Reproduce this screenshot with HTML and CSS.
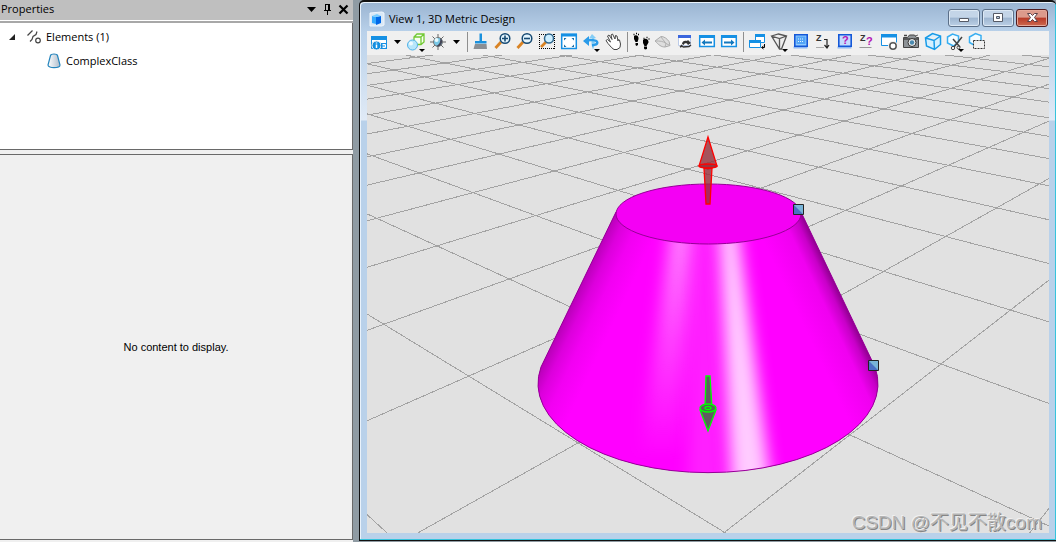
FILE: index.html
```html
<!DOCTYPE html>
<html lang="en">
<head>
<meta charset="utf-8">
<title>View 1, 3D Metric Design</title>
<link rel="stylesheet" href="styles.css">
</head>
<body>
<div class="app">
  <aside class="dock">
    <header class="dock-head">
      <h2 class="dock-title">Properties</h2>
      <button class="dock-btn" aria-label="Menu"><svg width="11" height="11" viewBox="0 0 11 11"><path d="M1 3h9L5.500 8z"/></svg></button>
      <button class="dock-btn" aria-label="Pin"><svg width="11" height="13" viewBox="0 0 11 13"><path d="M3 1h5v6H3zM4 2v5h2V2zM2 7h7v1H2zM5 8h1v4H5z" fill-rule="evenodd"/></svg></button>
      <button class="dock-btn" aria-label="Close"><svg width="11" height="11" viewBox="0 0 11 11"><path d="M1.500 1.500l8 8M9.500 1.500l-8 8" stroke="#000" stroke-width="2.200"/></svg></button>
    </header>
    <ul class="tree">
      <li class="tree-row">
        <svg class="twisty" width="8" height="8" viewBox="0 0 8 8"><path d="M7 1v6H1z" fill="#222"/></svg>
        <svg width="16" height="16" viewBox="0 0 16 16" fill="none" stroke="#444" stroke-width="1.200"><path d="M1.500 6.500l4-4 1-1M4 12.500l2-2 1-3 3-2 1-3"/><circle cx="12" cy="11.500" r="2.300"/></svg>
        <span>Elements (1)</span>
      </li>
      <li class="tree-row tree-child">
        <svg width="14" height="16" viewBox="0 0 14 16"><defs><linearGradient id="cg"><stop offset="0" stop-color="#fff"/><stop offset="1" stop-color="#aebccb"/></linearGradient></defs><path d="M3.500 2.500C4 .500 10 .500 10.500 2.500L13 12c0 3.500-12 3.500-12 0z" fill="url(#cg)" stroke="#2585bd" stroke-width="1.200"/></svg>
        <span>ComplexClass</span>
      </li>
    </ul>
    <section class="details"><p>No content to display.</p></section>
  </aside>

  <main class="window">
    <header class="titlebar">
      <svg width="16" height="16" viewBox="0 0 16 16"><path d="M1 2l12-1 2 1v12l-2 1H1z" fill="#d9e8f6" stroke="#eef6fd"/><path d="M3 5l4 1v7l-4-1z" fill="#35aaff"/><path d="M7 6l5-1v7l-5 2z" fill="#0068e8"/><path d="M3 5l5-2 4 2-5 1z" fill="#79ceff"/></svg>
      <h1 class="title">View 1, 3D Metric Design</h1>
      <button class="win-btn" aria-label="Minimize"><svg width="12" height="12" viewBox="0 0 12 12"><path d="M1.500 6.500h9v3h-9z" fill="#fff" stroke="#555a66"/></svg></button>
      <button class="win-btn" aria-label="Maximize"><svg width="12" height="12" viewBox="0 0 12 12"><path d="M1.500 1.500h9v8h-9zM4.500 4.500h3v2h-3z" fill="#fff" fill-rule="evenodd" stroke="#555a66"/></svg></button>
      <button class="win-btn close" aria-label="Close"><svg width="13" height="12" viewBox="0 0 13 12"><path d="M1.500 1.500h3l2 2 2-2h3L8.500 5.500l3 4h-3l-2-2-2 2h-3l3-4z" fill="#fff" stroke="#5a4048"/></svg></button>
    </header>

    <div class="client">
      <nav class="toolbar" aria-label="View tools">
        <button class="tool" aria-label="View attributes"><svg viewBox="0 0 22 22"><path d="M3.500 5.500h15v12h-15z" fill="#fff" stroke="#1b92e0"/><path d="M3 5h16v4H3z" fill="#1590e4"/><circle cx="8.500" cy="14.500" r="4.500" fill="#148fe0" stroke="#f0f0f0"/><path d="M8.500 11.500v1M8.500 13.500v3.500" stroke="#fff" stroke-width="1.500"/><path d="M13 12h6v6h-6z" fill="#1590e4"/><path d="M14.500 13.500h3v3h-3M14.500 15h3" stroke="#fff" fill="none"/></svg></button>
        <button class="tool drop" aria-label="More attributes"><svg viewBox="0 0 15 22"><path d="M4 9h7l-3.500 4z"/></svg></button>
        <button class="tool" aria-label="Display style"><svg viewBox="0 0 22 22"><path d="M9 6l3-3h7v8l-3 2.500H9zM9 6h7v7M16 6l3-3" fill="#f7fff0" stroke="#72c934" stroke-width="1.300"/><circle cx="7.500" cy="14" r="5" fill="#b8e6fb" stroke="#52b2e8"/><circle cx="6" cy="12.500" r="2" fill="#eefaff"/><path d="M14 18h6l-3 3z"/></svg></button>
        <button class="tool" aria-label="Brightness"><svg viewBox="0 0 22 22"><path d="M11 3v16M3 11h16M5.500 5.500l11 11M16.500 5.500l-11 11" stroke="#666"/><circle cx="11" cy="11" r="4.500" fill="#79c7e6" stroke="#777"/><path d="M13 7a4.500 4.500 0 0 1-4 8c3-1 5-4 4-8z" fill="#445"/><circle cx="9.500" cy="9" r="2" fill="#e6faff"/></svg></button>
        <button class="tool drop" aria-label="Brightness options"><svg viewBox="0 0 15 22"><path d="M4 9h7l-3.500 4z"/></svg></button>
        <i class="sep"></i>
        <button class="tool" aria-label="Update view"><svg viewBox="0 0 22 22"><path d="M9.500 2.500h2.500V10h4.500v2.500H5V10h4.500z" fill="#1b91dd"/><path d="M5 13h11.500l.5 5H3.500z" fill="#8b8f94"/></svg></button>
        <button class="tool" aria-label="Zoom in"><svg viewBox="0 0 22 22"><path d="M9 11l-5.500 6" stroke="#d98324" stroke-width="2.800"/><circle cx="13" cy="7.500" r="4.800" fill="#e5f6ff" stroke="#174a73" stroke-width="1.500"/><path d="M10 7.500h6M13 4.500v6" stroke="#174a73" stroke-width="1.600"/></svg></button>
        <button class="tool" aria-label="Zoom out"><svg viewBox="0 0 22 22"><path d="M9 11l-5.500 6" stroke="#d98324" stroke-width="2.800"/><circle cx="13" cy="7.500" r="4.800" fill="#e5f6ff" stroke="#174a73" stroke-width="1.500"/><path d="M10 7.500h6" stroke="#174a73" stroke-width="1.600"/></svg></button>
        <button class="tool" aria-label="Window area"><svg viewBox="0 0 22 22"><path d="M3 3.500h16M3 17.500h16M3.500 3v15M18.500 3v15" fill="none" stroke="#000" stroke-dasharray="1 1"/><path d="M10 11l-5 5" stroke="#d98324" stroke-width="2.600"/><circle cx="13" cy="7.500" r="4.500" fill="#cdeeff" stroke="#30678d" stroke-width="1.500"/></svg></button>
        <button class="tool" aria-label="Fit view"><svg viewBox="0 0 22 22"><path d="M3.700 3.500h14.600v14H3.700z" fill="#fff" stroke="#1590e4" stroke-width="1.500"/><path d="M3 2.500h16v3H3z" fill="#1590e4"/><path d="M6 7h2.500L6 9.500zM16 7v2.500L13.500 7zM6 16v-2.500L8.500 16zM16 16h-2.500l2.500-2.500z" fill="#186da5"/></svg></button>
        <button class="tool" aria-label="Rotate view"><svg viewBox="0 0 22 22"><path d="M12 3l4 4-2 .5c1.500 3 1 7-1 11-1.500-3-2-7-1-11H9z" fill="#84cdf6"/><path d="M3 10l6-5v3c5-.500 9.500.500 9.500 3.500S16 15 12 15.500v-2.500c2.500 0 4-.7 4-1.500s-3-1.500-7-1v4.500z" fill="#2a9be9"/><path d="M14 18h6l-3 3z"/></svg></button>
        <button class="tool" aria-label="Pan view"><svg viewBox="0 0 22 22"><path d="M9.500 16.500L6 12.500 4 9.500l1.500-1 3 2.500-3-6L7 4l3 4.500L9 4l1.500-1 2.500 5 .5-3.500 1.500.5 1 5 .5-1.500 1 .5 1 4-.5 3.500-3 2h-3z" fill="#fff" stroke="#444"/></svg></button>
        <i class="sep"></i>
        <button class="tool" aria-label="Walk"><svg viewBox="0 0 22 22"><path d="M4 5c2-2 5 0 4.500 3L7.500 11H5.500L4 8zM5.500 12h2.500v2l-1.500 1-1-1zM13 9c2-2.500 6-.5 5.500 2.500l-2 3.500h-2L13 12zM14 15.500h3V18l-2 .5-1-1z"/><path d="M3.500 3.500h1M6 2.500h1M8 3.500h1M13.500 7.500h1M16.500 6.500h1M18.500 8h1" stroke="#000" stroke-width="1.500"/></svg></button>
        <button class="tool" aria-label="Fly"><svg viewBox="0 0 22 22"><path d="M3 10l6-4.500c3 0 6 2 8 5l1 4-5 1.500c-4 0-6-2-10-6z" fill="#dedede" stroke="#aaa"/><path d="M3 10c5 0 8 0 11 2.500l4 2M9 6l5 6.500-1 3.500" fill="none" stroke="#b2b2b2"/></svg></button>
        <button class="tool" aria-label="Navigate view"><svg viewBox="0 0 22 22"><path d="M4.500 4.500h12v10h-12z" fill="#fff" stroke="#bccbe8"/><path d="M4 4h13v3H4z" fill="#3b66dd"/><path d="M8 13c0-3 3-4 5-3l1-1 3 3-3 2-1-1.500c-2-.500-3 0-3 1.500z" fill="#333"/><path d="M9 16l6-.500 2-1.500M7 14l2 2M6 16l2-1" stroke="#333" stroke-width="1.500" fill="none"/></svg></button>
        <button class="tool" aria-label="View previous"><svg viewBox="0 0 22 22"><path d="M3.700 5h14.600v10.500H3.700z" fill="#fff" stroke="#1590e4" stroke-width="1.500"/><path d="M3 4h16v3H3z" fill="#1590e4"/><path d="M5.500 11.500l3.500-3v2h7v2H9v2z" fill="#1478bd"/></svg></button>
        <button class="tool" aria-label="View next"><svg viewBox="0 0 22 22"><path d="M3.700 5h14.600v10.500H3.700z" fill="#fff" stroke="#1590e4" stroke-width="1.500"/><path d="M3 4h16v3H3z" fill="#1590e4"/><path d="M16.500 11.500l-3.500-3v2H6v2h7v2z" fill="#1478bd"/></svg></button>
        <i class="sep"></i>
        <button class="tool" aria-label="Copy view"><svg viewBox="0 0 22 22"><path d="M9.500 3.500h9v8h-9z" fill="#fff" stroke="#1590e4"/><path d="M9 3h10v3H9z" fill="#1590e4"/><path d="M3.500 9.500h11v7h-11z" fill="#fff" stroke="#1590e4"/><path d="M3 9h12v3H3z" fill="#1590e4"/><path d="M18.500 13v3.500H16M17.500 15l-2 1.500 2 1.500" fill="none" stroke="#000"/></svg></button>
        <button class="tool" aria-label="Change perspective"><svg viewBox="0 0 22 22"><path d="M3.500 5l7-2 8 2-5 13h-2zM3.500 5l8 2.500 7-2.500M11.500 7.500V18" fill="#eee" stroke="#555" stroke-width="1.300"/><path d="M14 18h6l-3 3z"/></svg></button>
        <button class="tool" aria-label="Set display depth"><svg viewBox="0 0 22 22"><path d="M3.500 15.500h14v2h-14z" fill="#8fb8f3"/><path d="M4.800 3.800h12.400v11.400H4.800z" fill="#90cbff" stroke="#1458d8" stroke-width="1.600"/><path d="M6.500 5.500h9v7.500h-9z" fill="#53a5f7"/><path d="M8 8h6M8 10.500h6" stroke="#e8f8ff" stroke-dasharray="1 1"/></svg></button>
        <button class="tool" aria-label="Set active depth"><svg viewBox="0 0 22 22"><text x="4" y="10" class="glyph">Z</text><path d="M4 16.500h8" stroke="#aaa"/><path d="M12 8.500h3V17M12.500 14l2.500 3 2-3" fill="none" stroke="#222" stroke-width="1.200"/></svg></button>
        <button class="tool" aria-label="Show display depth"><svg viewBox="0 0 22 22"><path d="M3.500 15.500h14v2h-14z" fill="#8fb8f3"/><path d="M4.800 3.800h12.400v11.400H4.800z" fill="#c4dcff" stroke="#1458d8" stroke-width="1.600"/><text x="8" y="13" class="glyph ask">?</text></svg></button>
        <button class="tool" aria-label="Show active depth"><svg viewBox="0 0 22 22"><text x="4" y="10" class="glyph">Z</text><text x="10" y="14" class="glyph ask">?</text><path d="M3.500 16.500h12" stroke="#999"/></svg></button>
        <button class="tool" aria-label="View settings"><svg viewBox="0 0 22 22"><path d="M3.500 3.500h15v11h-15z" fill="#fff" stroke="#1590e4"/><path d="M3 3h16v3.500H3z" fill="#1590e4"/><circle cx="15" cy="15" r="5" fill="#f0f0f0"/><circle cx="15" cy="15" r="3.200" fill="#fff" stroke="#555" stroke-width="1.500"/></svg></button>
        <button class="tool" aria-label="Camera"><svg viewBox="0 0 22 22"><path d="M3.500 6.500h4l2-2.500h5l2 2.500h2v10h-15z" fill="#8e9397" stroke="#444"/><path d="M4 8h14M4 4.500h3" stroke="#444" stroke-width="1.500"/><circle cx="12" cy="11.500" r="4" fill="#eee" stroke="#333"/><circle cx="12" cy="11.500" r="2.200" fill="#4b8aaf"/><path d="M15 5l3-1" stroke="#666"/></svg></button>
        <button class="tool" aria-label="Clip volume"><svg viewBox="0 0 22 22"><path d="M3.500 7l7-4.500 8 2.500v8.500l-6 5-8-3.500zM3.500 7l8.500 2.500L18.500 5M12 9.500l.500 9" fill="#d5f0ff" stroke="#179be8" stroke-width="1.500"/></svg></button>
        <button class="tool" aria-label="Cut section"><svg viewBox="0 0 22 22"><path d="M3.500 6l5-3 6 2v6l-5 4-6-3z" fill="#f4fcff" stroke="#38aef1" stroke-width="1.500"/><path d="M18 6l-8 10M9 8l7 8" stroke="#444" stroke-width="1.500"/><circle cx="9" cy="17" r="1.700" fill="none" stroke="#444"/><circle cx="14.500" cy="16.500" r="1.500" fill="none" stroke="#444"/><path d="M14 18h6l-3 3z"/></svg></button>
        <button class="tool" aria-label="Clip mask"><svg viewBox="0 0 22 22"><path d="M3.500 6l6-3.500 5.500 2v6l-6 4-5.500-3z" fill="#f4fcff" stroke="#38aef1" stroke-width="1.500"/><path d="M7.500 9.500h11v8h-11z" fill="#f0f0f0" stroke="#333" stroke-dasharray="2 1"/></svg></button>
      </nav>

      <div class="view">
        <svg class="scene" viewBox="367 55 682 478" preserveAspectRatio="xMidYMid slice" role="img" aria-label="Magenta truncated cone on a ground grid">
          <defs>
            <clipPath id="side"><path d="M616 212L541 367A170 89 0 1 0 875 367L801 212A92.500 30 0 0 1 616 212z"/></clipPath>
            <linearGradient id="left" gradientUnits="userSpaceOnUse" x1="578" y1="290" x2="620" y2="310"><stop offset="0" stop-color="#b800b8"/><stop offset=".25" stop-color="#dc00dc"/><stop offset=".55" stop-color="#f200f2"/><stop offset="1" stop-color="#f0f"/></linearGradient>
            <linearGradient id="right" gradientUnits="userSpaceOnUse" x1="838" y1="290" x2="796" y2="310"><stop offset="0" stop-color="#900090"/><stop offset=".16" stop-color="#c800c8"/><stop offset=".4" stop-color="#f000f0"/><stop offset="1" stop-color="#f0f"/></linearGradient>
            <linearGradient id="faint" x1="0" y1="0" x2="0" y2="1"><stop offset="0" stop-color="#fff" stop-opacity=".55"/><stop offset=".5" stop-color="#fff" stop-opacity=".25"/><stop offset="1" stop-color="#fff" stop-opacity="0"/></linearGradient>
            <linearGradient id="knob"><stop offset="0" stop-color="#3c5fc0"/><stop offset="1" stop-color="#82c4dc"/></linearGradient>
            <filter id="soft" x="-1" width="3" y="-.1" height="1.200" color-interpolation-filters="sRGB"><feGaussianBlur stdDeviation="8 1"/></filter>
          </defs>
          <path id="grid" class="grid" d=""/>
          <path d="M616 212L541 367A170 89 0 1 0 875 367L801 212z" fill="#f0f"/>
          <g clip-path="url(#side)">
            <path d="M530 190h178v300H530z" fill="url(#left)"/>
            <path d="M708 190h180v300H708z" fill="url(#right)"/>
            <path d="M672 220h20l-12 240h-40z" fill="url(#faint)" filter="url(#soft)"/>
            <path d="M690 220h24l10 260h-36z" fill="#fff" opacity=".12" filter="url(#soft)"/>
            <path d="M718 220h19l34 265h-40z" fill="#fff" opacity=".8" filter="url(#soft)"/>
          </g>
          <path class="edge" d="M616 212L541 367A170 89 0 1 0 875 367L801 212"/>
          <ellipse class="edge top" cx="708.500" cy="214" rx="92.500" ry="30"/>
          <g class="arrow-up"><path d="M708 137l9 29-9 3-9-3z"/><path d="M704 168l2 36h4l2-36z" /><ellipse cx="708" cy="166" rx="9" ry="2"/></g>
          <g class="arrow-down"><path d="M706 376h4l2 32h-7z"/><path d="M700 410l8 21 8-21z"/><ellipse cx="708" cy="408" rx="8" ry="4"/><ellipse cx="708" cy="408" rx="3" ry="1.500"/></g>
          <path d="M793.500 204.500h10v10h-10zM868.500 360.500h10v10h-10z" fill="#78b4d8" stroke="#222"/>
          <path d="M794 205l9 9h-9zM869 361l9 9h-9z" fill="#4a70c4"/>
        </svg>
        <span class="watermark">CSDN @不见不散com</span>
      </div>
    </div>
  </main>
</div>
<script src="grid.js"></script>
</body>
</html>
```
FILE: styles.css
```css
* { box-sizing: border-box; }
body {
  margin: 0;
  font: 11px/16px "Open Sans", "Noto Sans", sans-serif;
  color: #000;
  background: #8f9ba3;
}
h1, h2, p, ul { margin: 0; padding: 0; font: inherit; }
button { padding: 0; border: 0; background: none; font: inherit; display: flex; align-items: center; justify-content: center; }

.app { display: flex; height: 100vh; gap: 6px; }

.dock { flex: 0 0 353px; display: flex; flex-direction: column; background: #f0f0f0; }
.dock-head {
  display: flex; align-items: center; height: 23px; padding: 0 2px 3px 1px;
  background: #bfbfbf; border-bottom: 2px solid #a8a8a8; box-shadow: inset 0 -1px #fff;
}
.dock-title { flex: 1; }
.dock-btn { width: 16px; height: 18px; }
.tree {
  flex: 0 0 127px; list-style: none; padding: 2px 0; background: #fff;
  border-right: 1px solid #696969; border-bottom: 1px solid #696969;
}
.tree-row { display: flex; align-items: center; height: 24px; gap: 4px; padding-left: 8px; }
.tree-row .twisty { margin-right: 6px; }
.tree-child { padding-left: 47px; gap: 5px; }
.details {
  flex: 1; margin: 4px 0 2px; display: flex; align-items: center; justify-content: center;
  border: 1px solid #696969; border-left: 0;
  font: 11px/14px "Liberation Sans", Arial, sans-serif;
}

.window {
  flex: 1; min-width: 0; display: flex; flex-direction: column;
  margin-bottom: 1px; padding: 0 7px 7px;
  border: solid #111; border-width: 2px 0 1px 1px; border-radius: 5px 5px 0 0;
  box-shadow: inset -1px -1px #35c3dc, inset 1px 1px #e9f2fb;
  background: linear-gradient(#9ab4d1 0, #b9d1ea 30px, #e0eaf6 118px, #b9d1ea 119px);
}
.titlebar { display: flex; align-items: center; height: 29px; padding: 5px 1px 0 2px; gap: 2px; }
.title { flex: 1; padding-left: 2px; white-space: nowrap; }
.win-btn {
  width: 32px; height: 18px; margin-bottom: 2px; border: 1px solid #5b6f88; border-radius: 3px;
  background: linear-gradient(#c4d5e8 45%, #9db5d0 50%, #bcd0e6);
  box-shadow: inset 0 0 0 1px #dce8f4;
}
.win-btn.close { background: linear-gradient(#dc9a8c 45%, #b83a28 50%, #cd6a50); border-color: #501c20; box-shadow: inset 0 0 0 1px #e5a99b; }

.client { flex: 1; min-height: 0; display: flex; flex-direction: column; }
.toolbar { display: flex; align-items: center; height: 24px; padding: 0 1px 2px; background: #f0f0f0; }
.tool { flex: 0 0 22px; height: 22px; }
.tool svg { width: 22px; height: 22px; }
.tool.drop, .tool.drop svg { flex-basis: 15px; width: 15px; }
.sep { flex: 0 0 6px; height: 20px; background: linear-gradient(#8f8f8f, #8f8f8f) center / 1px 100% no-repeat; }
.glyph { font: bold 9px "Liberation Sans", Arial, sans-serif; fill: #333; }
.glyph.ask { font-size: 11px; fill: #b414b4; }

.view { position: relative; flex: 1; min-height: 0; background: #e1e1e1; overflow: hidden; }
.scene { display: block; width: 100%; height: 100%; }
.grid { fill: none; stroke: #a3a3a3; shape-rendering: crispEdges; }
.edge { fill: none; stroke: #960096; }
.edge.top { fill: #f400f4; }
.arrow-up { fill: #96303acc; stroke: #f00; stroke-width: 1.300; }
.arrow-down { fill: #506050e6; stroke: #0f0; stroke-width: 1.300; }
.watermark {
  position: absolute; right: 7px; bottom: -1px;
  font: 19px/22px "Liberation Sans", "Noto Sans CJK SC", sans-serif;
  color: #b4b4b4; text-shadow: -1px -1px #f0f0f0, 1px 1px #858585;
}
```
FILE: grid.js
```js
// Ground grid in two-point perspective: each family of lines meets on the horizon.
const horizon = -86, depth = 618.3;
const vanishA = -288, vanishB = 1520;
const ray = (vx, x, y) => {
  const k = 3;
  return `M${vx} ${horizon}L${vx + (x - vx) * k} ${horizon + (y - horizon) * k}`;
};
let d = "";
for (let i = -3; i <= 16; i++) {
  const wu = 1 + 0.187 * i, wv = 1 + 0.169 * i;
  d += ray(vanishA, (724.5 + 284.3 * i) / wu, horizon + depth / wu);
  d += ray(vanishB, (724.5 - 48.7 * i) / wv, horizon + depth / wv);
}
document.getElementById("grid").setAttribute("d", d);
```
